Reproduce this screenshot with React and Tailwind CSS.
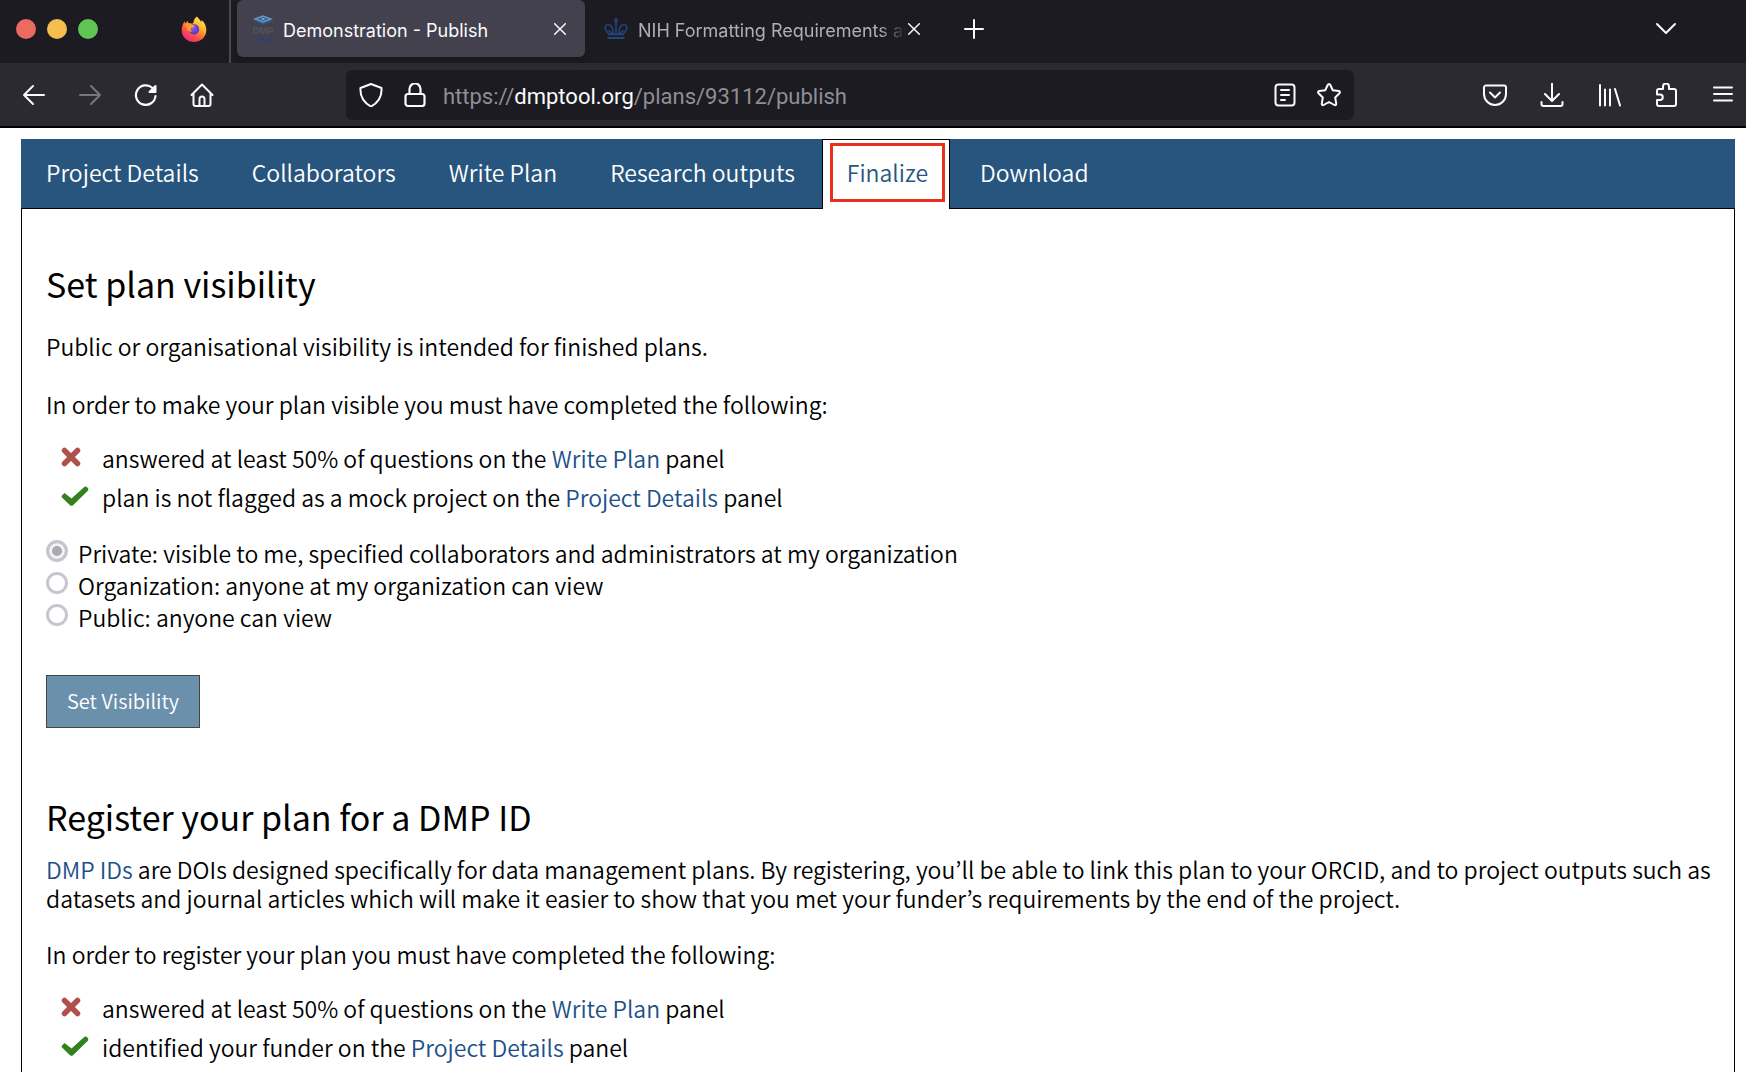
import React from "react";

function Icon({ children, className = "size-6", ...rest }) {
  return (
    <svg
      viewBox="0 0 24 24"
      fill="none"
      stroke="currentColor"
      strokeWidth="2"
      strokeLinecap="round"
      strokeLinejoin="round"
      className={className}
      aria-hidden="true"
      {...rest}
    >
      {children}
    </svg>
  );
}

function ToolButton({ label, muted, children }) {
  return (
    <button
      type="button"
      aria-label={label}
      className={muted ? "shrink-0 text-[#77767e]" : "shrink-0 text-[#fbfbfe]"}
    >
      {children}
    </button>
  );
}

function FirefoxLogo() {
  return (
    <svg viewBox="0 0 26 28" className="h-7 w-6.5 shrink-0" aria-hidden="true">
      <defs>
        <linearGradient id="ffBody" x1="0.85" y1="0.05" x2="0.25" y2="1">
          <stop offset="0" stopColor="#fff04f" />
          <stop offset="0.35" stopColor="#ffb02e" />
          <stop offset="0.65" stopColor="#ff5a3c" />
          <stop offset="1" stopColor="#e8238a" />
        </linearGradient>
        <radialGradient id="ffCore" cx="0.4" cy="0.4" r="0.7">
          <stop offset="0" stopColor="#8f5cf5" />
          <stop offset="1" stopColor="#4b35b5" />
        </radialGradient>
      </defs>
      <path
        d="M16 1.500c1 2 3.200 3 4 5.500.6-.7.7-1.400.6-2.100C23.600 7.500 25.400 11 25.300 15c0 7-5.500 12-12.300 12S.7 22 .7 15.200c0-3.700 1.200-6.900 3-9 0 1 .2 1.700.6 2.300.8-1.300 1.700-2.100 2.700-2.600-.1 1 .1 1.900.6 2.600h4.600c.3-3.300 1.600-5.500 3.800-7z"
        fill="url(#ffBody)"
      />
      <circle cx="13" cy="14.200" r="5.200" fill="url(#ffCore)" />
      <path
        d="M4.500 9c2.500-1.300 5.500-.8 7 1 1.200.1 2 .4 2.300.9-.5 1.300-2.300 1.400-3.600 2.200-.8 1-.4 2.600 1 3.400-3 .8-6-1.300-6.700-7.500z"
        fill="#ff9a2e"
      />
    </svg>
  );
}

function DmpFavicon() {
  return (
    <svg viewBox="0 0 24 30" className="h-7.5 w-6 shrink-0" aria-hidden="true">
      <path d="M3.500 5v2.500L12 11l8.500-3.500V5z" fill="#2f5486" />
      <path d="M4 5 12 2l8 3-8 3z" fill="#3a5a86" stroke="#6c96c8" strokeWidth="1.400" />
      <path d="M9.500 5 12 4l2.500 1L12 6z" fill="#8db4dd" />
      <text x="12" y="20" textAnchor="middle" fontSize="9" fontWeight="500" fontFamily="Inter, sans-serif" fill="#56575c">DMP</text>
      <text x="12" y="28.500" textAnchor="middle" fontSize="9" fontFamily="Inter, sans-serif" fill="#2f3d80">Tool</text>
    </svg>
  );
}

function CrownFavicon() {
  return (
    <svg viewBox="0 0 24 22" className="h-5.5 w-6 shrink-0" fill="none" stroke="#24467f" strokeWidth="1.500" aria-hidden="true">
      <path d="M12 0v7M10.200 2.500h3.600" strokeWidth="1.800" />
      <path d="M4.500 15.500C1.500 13 0 9 2.500 7.200 6 5.500 9.500 8 9 15.500M19.500 15.500c3-2.500 4.500-6.500 2-8.300C18 5.500 14.500 8 15 15.500" />
      <path d="M12 5v11M4.500 12.500l4 3M19.500 12.500l-4 3" />
      <path d="M4 16.200h16M3.500 20h17" strokeWidth="2" />
    </svg>
  );
}

function CloseButton({ label }) {
  return (
    <button type="button" aria-label={label} className="shrink-0 text-[#fbfbfe]">
      <Icon className="size-4" strokeWidth="2.200">
        <path d="M4 4l16 16M20 4 4 20" />
      </Icon>
    </button>
  );
}

function TabStrip() {
  return (
    <div className="flex h-[63px] bg-[#1c1b22]">
      <div className="flex w-[231px] shrink-0 items-center justify-between border-r-2 border-[#4a4951] pr-[22px] pb-1.5 pl-4">
        <div className="flex gap-[11px]">
          <span className="size-5 rounded-full bg-[#ed6a5e]" />
          <span className="size-5 rounded-full bg-[#f4bf4f]" />
          <span className="size-5 rounded-full bg-[#61c554]" />
        </div>
        <FirefoxLogo />
      </div>
      <div className="flex flex-1 pb-1.5">
        <div className="ml-1.5 flex w-[348px] items-center rounded-md bg-[#42414d] pr-[17px] pl-3.5 shadow-md">
          <DmpFavicon />
          <span className="ml-2 flex-1 pt-1 font-[Inter,sans-serif] text-[18px] leading-6 whitespace-nowrap text-[#fbfbfe]">
            Demonstration - Publish
          </span>
          <CloseButton label="Close Demonstration - Publish" />
        </div>
        <div className="flex w-[344px] items-center pr-[7px] pl-[19px]">
          <CrownFavicon />
          <span className="ml-2.5 flex-1 overflow-hidden mask-r-from-90% mask-r-to-100% pt-1 font-[Inter,sans-serif] text-[18px] leading-6 whitespace-nowrap text-[#b0afb6]">
            NIH Formatting Requirements an
          </span>
          <CloseButton label="Close NIH Formatting Requirements" />
        </div>
        <div className="flex flex-1 items-center justify-between pr-[68px] pl-[33px] text-[#fbfbfe]">
          <button type="button" aria-label="New tab">
            <Icon><path d="M12 3v18M3 12h18" /></Icon>
          </button>
          <button type="button" aria-label="List all tabs">
            <Icon><path d="m3 7 9 9 9-9" /></Icon>
          </button>
        </div>
      </div>
    </div>
  );
}

function Toolbar() {
  return (
    <div className="flex h-[65px] items-center border-b-2 border-black bg-[#2b2a33] pt-px pr-[11px] pl-[22px]">
      <div className="flex gap-8">
        <ToolButton label="Back"><Icon><path d="M22 12H2M11 3l-9 9 9 9" /></Icon></ToolButton>
        <ToolButton label="Forward" muted><Icon><path d="M2 12h20M13 3l9 9-9 9" /></Icon></ToolButton>
        <ToolButton label="Reload">
          <Icon>
            <path d="M21.500 13a9.800 9.800 0 1 1-3-8" strokeWidth="2.200" />
            <path d="M21.500 3v6h-6z" fill="currentColor" />
          </Icon>
        </ToolButton>
        <ToolButton label="Home">
          <Icon>
            <path d="M1.500 12 12 1.500 22.500 12M3.500 10.500V21a2 2 0 0 0 2 2h13a2 2 0 0 0 2-2V10.500" />
            <path d="M9.500 22.500V16a2.500 2.500 0 0 1 5 0v6.500" />
          </Icon>
        </ToolButton>
      </div>
      <div className="mr-[129px] ml-[132px] flex h-[50px] flex-1 items-center rounded-md bg-[#1c1b22] px-[13px] text-[#fbfbfe]">
        <Icon className="size-6 shrink-0">
          <path d="M12 1 22.500 5c.5 7-2.500 14-10.500 18.500C4 19 1 12 1.500 5z" />
        </Icon>
        <Icon className="ml-5 size-6 shrink-0" strokeWidth="2.200">
          <rect x="2.500" y="11" width="19" height="12" rx="2.500" />
          <path d="M6.500 11V6a5.500 5.500 0 0 1 11 0v5" />
        </Icon>
        <div className="ml-4 flex-1 pt-[3px] font-[Roboto,sans-serif] text-[22px] leading-7 whitespace-nowrap text-[#8f8e96]">
          https://<span className="text-[#fbfbfe]">dmptool.org</span>/plans/93112/publish
        </div>
        <div className="flex gap-5">
          <ToolButton label="Reader view">
            <Icon>
              <rect x="2.500" y="1.500" width="19" height="21" rx="3" />
              <path d="M8 7h8M8 12h8M8 17h4" />
            </Icon>
          </ToolButton>
          <ToolButton label="Bookmark">
            <Icon>
              <path d="M12 1c.6 0 1 .4 1.300 1l2.500 5.300 6 .8c1.200.2 1.500 1.300.7 2.100l-4.300 4.300 1 6.200c.2 1.200-.8 1.900-1.800 1.300L12 19l-5.400 3c-1 .6-2-.1-1.800-1.300l1-6.200-4.300-4.300c-.8-.8-.5-1.900.7-2.100l6-.8L10.700 2c.3-.6.7-1 1.300-1z" />
            </Icon>
          </ToolButton>
        </div>
      </div>
      <div className="flex gap-[33px]">
        <ToolButton label="Save to Pocket">
          <Icon>
            <path d="M3 2.500h18A2 2 0 0 1 23 4.500V11a11 11 0 0 1-22 0V4.500a2 2 0 0 1 2-2z" />
            <path d="m7 9.500 5 5 5-5" />
          </Icon>
        </ToolButton>
        <ToolButton label="Downloads">
          <Icon><path d="M12 .5v17M5 11l7 7 7-7M1.500 19v2a2 2 0 0 0 2 2h17a2 2 0 0 0 2-2v-2" /></Icon>
        </ToolButton>
        <ToolButton label="Library">
          <Icon><path d="M3 2v20.500M8 6.500v16M13 6.500v16M18 6l5 16.500" /></Icon>
        </ToolButton>
        <ToolButton label="Extensions">
          <Icon>
            <path d="M3 11V8a2 2 0 0 1 2-2h4V3.500a3 3 0 0 1 6 0V6h5a2 2 0 0 1 2 2v13a2 2 0 0 1-2 2H5a2 2 0 0 1-2-2v-4h3a2.700 2.700 0 0 0 0-5.500H3" />
          </Icon>
        </ToolButton>
        <ToolButton label="Open application menu">
          <Icon><path d="M3 4.500h18M3 11h18M3 17.500h18" /></Icon>
        </ToolButton>
      </div>
    </div>
  );
}

const tabs = ["Project Details", "Collaborators", "Write Plan", "Research outputs", "Finalize", "Download"];

function PlanTabs() {
  return (
    <nav className="flex h-[70px]" aria-label="Plan sections">
      {tabs.map((tab) =>
        tab === "Finalize" ? (
          <a
            key={tab}
            href="#finalize"
            aria-current="page"
            className="flex border border-b-0 border-black bg-white pt-[3px] pr-1 pb-[7px] pl-[7px] text-[#27557e]"
          >
            <span className="flex items-center border-3 border-[#e8301c] px-3.5">{tab}</span>
          </a>
        ) : (
          <a
            key={tab}
            href={"#" + tab.toLowerCase().replace(" ", "-")}
            className="flex items-center border-b border-black bg-[#27557e] pr-[27px] pb-0.5 pl-[26px] text-white first:pl-[25px] last-of-type:pl-[30px]"
          >
            {tab}
          </a>
        )
      )}
      <span className="flex-1 border-b border-black bg-[#27557e]" />
    </nav>
  );
}

function Cross() {
  return (
    <svg viewBox="0 0 20 20" className="size-5 shrink-0" aria-label="Incomplete">
      <path d="M3.500 3.500l13 13M16.500 3.500l-13 13" stroke="#b0504d" strokeWidth="5.500" strokeLinecap="round" />
    </svg>
  );
}

function Check() {
  return (
    <svg viewBox="0 0 28 20" className="h-5 w-7 shrink-0" aria-label="Complete">
      <path d="M1 9.500 3.500 7 10.500 12.500 23.500.7l1.800-.2 2 2-.2 2L12 19.200q-1.500 1-3 0L1 11.500q-.8-1 0-2z" fill="#33801f" />
    </svg>
  );
}

function Requirement({ done, before, link }) {
  return (
    <li className="flex h-[39px] items-center leading-[39px]">
      <span className="flex w-[41px] items-center pb-[3px]">{done ? <Check /> : <Cross />}</span>
      <span>
        {before} <a href="#panel" className="text-[#1c5088]">{link}</a> panel
      </span>
    </li>
  );
}

const options = [
  ["private", "Private: visible to me, specified collaborators and administrators at my organization"],
  ["organization", "Organization: anyone at my organization can view"],
  ["public", "Public: anyone can view"],
];

export default function App() {
  return (
    <div className="flex min-h-screen flex-col bg-white">
      <header>
        <TabStrip />
        <Toolbar />
      </header>
      <main className="mt-[11px] mr-[11px] ml-[21px] flex flex-1 flex-col font-['Noto_Sans_CJK_KR',sans-serif] text-[23px] leading-[29px] font-[350] text-black">
        <PlanTabs />
        <div className="flex-1 border-x border-black pt-[55px] pr-5 pl-6">
          <section>
            <h2 className="text-[34px] leading-10 font-normal">Set plan visibility</h2>
            <p className="mt-7">Public or organisational visibility is intended for finished plans.</p>
            <p className="mt-[29px]">In order to make your plan visible you must have completed the following:</p>
            <ul className="mt-5 pl-[15px]">
              <Requirement before="answered at least 50% of questions on the" link="Write Plan" />
              <Requirement done before="plan is not flagged as a mock project on the" link="Project Details" />
            </ul>
            <form className="mt-5">
              {options.map(([value, text]) => (
                <label key={value} className="flex h-8 items-center leading-8">
                  <input
                    type="radio"
                    name="visibility"
                    value={value}
                    defaultChecked={value === "private"}
                    className="mr-2.5 mb-1 size-[22px] shrink-0 appearance-none rounded-full border-3 border-[#c6c6ce] bg-white checked:bg-[#a9a9b4] checked:shadow-[inset_0_0_0_3px_#f3f3f6]"
                  />
                  {text}
                </label>
              ))}
              <button
                type="button"
                className="mt-[42px] h-[53px] border border-[#444] bg-[#6b90ac] px-[20px] pb-0.5 text-[20px] text-white"
              >
                Set Visibility
              </button>
            </form>
          </section>
          <section className="mt-[69px]">
            <h2 className="text-[34px] leading-10 font-normal">Register your plan for a DMP ID</h2>
            <p className="mt-[18px]">
              <a href="#dmp-ids" className="text-[#1c5088]">DMP IDs</a> are DOIs designed specifically for data
              management plans. By registering, you’ll be able to link this plan to your ORCID, and to project outputs
              such as datasets and journal articles which will make it easier to show that you met your funder’s
              requirements by the end of the project.
            </p>
            <p className="mt-[27px]">In order to register your plan you must have completed the following:</p>
            <ul className="mt-5 pl-[15px]">
              <Requirement before="answered at least 50% of questions on the" link="Write Plan" />
              <Requirement done before="identified your funder on the" link="Project Details" />
            </ul>
          </section>
        </div>
      </main>
    </div>
  );
}
